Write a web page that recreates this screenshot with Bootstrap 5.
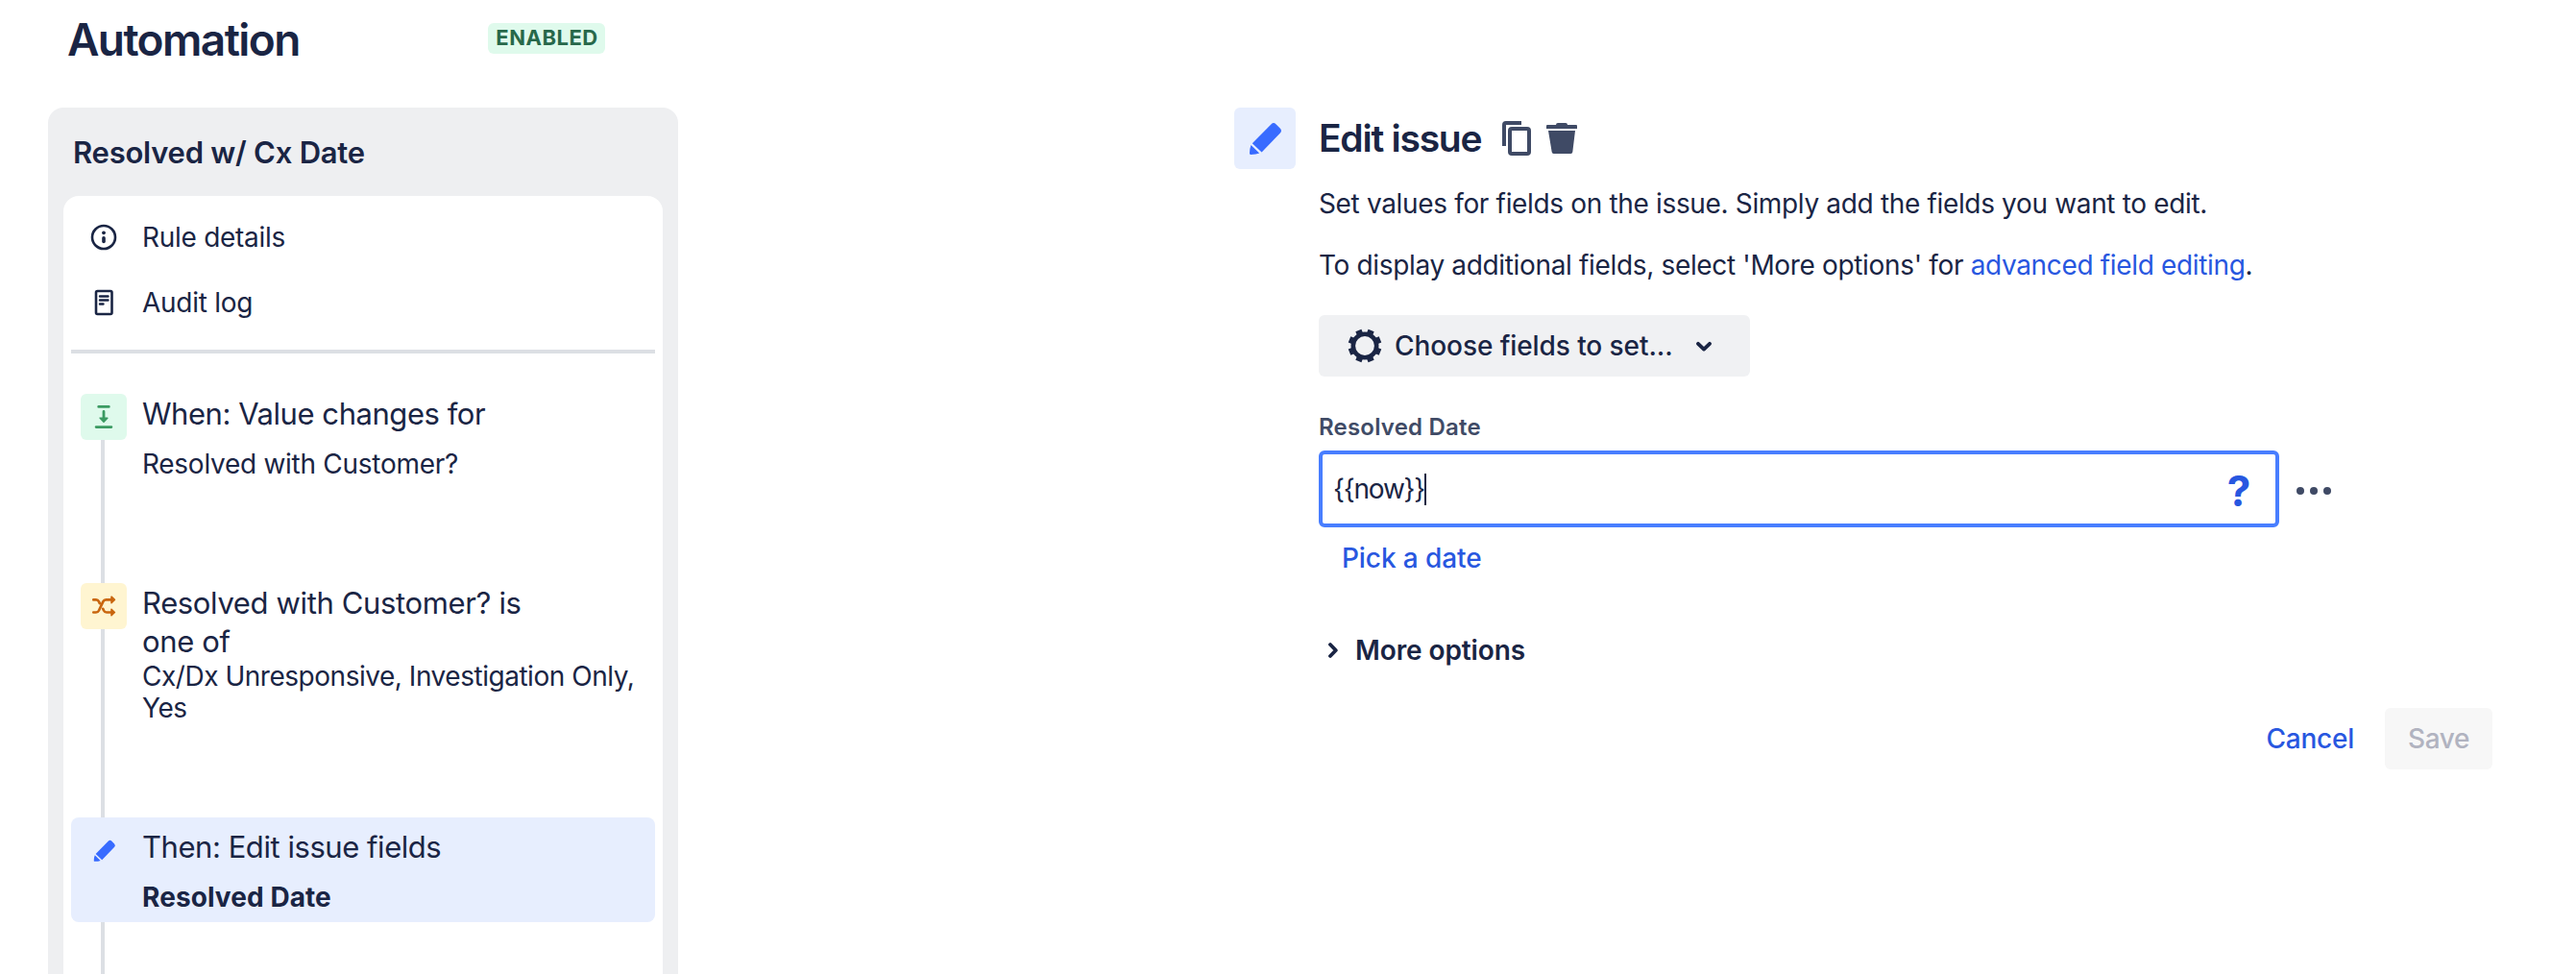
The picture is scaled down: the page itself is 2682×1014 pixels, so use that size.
<!DOCTYPE html>
<html lang="en">
<head>
    <meta charset="UTF-8">
    <meta name="viewport" content="width=device-width, initial-scale=1.0">
    <title>Automation</title>
    <link rel="stylesheet" href="https://cdn.jsdelivr.net/npm/bootstrap@5.3.2/dist/css/bootstrap.min.css">
    <style>
        body{
            font-family: Inter, "Liberation Sans", sans-serif;
            font-size: 28px;
            line-height: 40px;
            letter-spacing: -.28px;
            color: #1a2544;
            background: #fff;
            height: 1014px;
            overflow: hidden;
        }
        svg{ display: block; flex: none; }

        .topo{ height: 112px; padding-left: 70px; }
        .topo h1{ width: 438px; font-size: 46px; font-weight: 600; line-height: 56px; letter-spacing: -1.6px; margin: 13px 0 0; }
        .status{
            width: 122px; height: 32px; margin-top: 24px; padding-left: 1px; border-radius: 6px;
            background: #dffaec; color: #27684a;
            font-size: 22px; font-weight: 700; line-height: 30px; letter-spacing: .5px;
        }

        /* rule panel */
        .regra{ width: 656px; height: 902px; margin-left: 50px; padding: 0 16px; background: #eeeff1; border-radius: 16px 16px 0 0; }
        .regra h2{ height: 92px; padding: 27px 0 0 10px; margin: 0; font-size: 31px; font-weight: 600; line-height: 40px; letter-spacing: -.25px; }
        .passos{ height: 810px; padding: 8px; background: #fff; border-radius: 16px 16px 0 0; }
        .item{ height: 68px; padding: 1px 0 0 18px; gap: 24px; }
        .linha{ height: 4px; background: #dcdfe4; margin: 16px 0 42px; }
        .passo{ padding-left: 10px; gap: 16px; }
        .trilho{ width: 48px; }
        .trilho i{ width: 4px; background: #dcdfe4; flex: 1; margin-right: 2px; }
        .quadro{ width: 48px; height: 48px; border-radius: 6px; }
        .titulo{ font-size: 31px; line-height: 40px; letter-spacing: -.45px; padding-top: 1px; }
        .detalhe{ line-height: 33px; }
        .ativo{ height: 109px; padding-top: 10px; background: #e7eefe; border-radius: 8px; }

        /* component form */
        .editor{ margin-left: 579px; width: 1310px; }
        .tile{ width: 64px; height: 64px; border-radius: 6px; background: #e7eefe; margin-right: 24px; }
        .editor h3{ width: 191px; font-size: 39px; font-weight: 600; line-height: 64px; letter-spacing: -1.25px; margin: 0; }
        .corpo{ padding: 16px 0 0 88px; }
        .corpo p{ margin: 0 0 24px; letter-spacing: -.34px; }
        .corpo a{ color: #2857e0; text-decoration: none; }
        .escolher{ width: 449px; height: 64px; margin-top: 32px; padding-left: 30px; background: #f0f1f3; border-radius: 6px; font-weight: 500; letter-spacing: -.08px; }
        .rotulo{ margin-top: 37px; font-size: 24px; font-weight: 600; line-height: 32px; letter-spacing: .2px; color: #404b66; }
        .campo{ width: 1000px; height: 80px; border: 4px solid #487eff; border-radius: 6px; padding: 0 26px 0 11px; }
        .campo span{ letter-spacing: -1.2px; }
        .cursor{ width: 2px; height: 33px; background: #1a2544; }
        .ajuda{ font-size: 44px; font-weight: 700; color: #2857e0; padding-top: 3px; }
        .data{ margin: 12px 0 0 24px; font-weight: 500; letter-spacing: -.1px; }
        .mais{ margin: 56px 0 0 10px; gap: 18px; font-weight: 600; letter-spacing: -.1px; }
        .acoes{ height: 64px; margin-top: 40px; gap: 32px; font-weight: 500; letter-spacing: -.25px; }
        .salvar{ width: 112px; height: 64px; line-height: 64px; border-radius: 6px; background: #f7f7f7; color: #b1b3c0; letter-spacing: -.4px; }
    </style>
</head>
<body>
    <header class="topo d-flex">
        <h1>Automation</h1>
        <div class="status text-center">ENABLED</div>
    </header>

    <main class="d-flex align-items-start">
        <section class="regra">
            <h2>Resolved w/ Cx Date</h2>
            <div class="passos">
                <div class="item d-flex align-items-center">
                    <svg width="32" height="32" viewBox="0 0 32 32">
                        <circle cx="16" cy="16" r="12" fill="none" stroke="#1a2544" stroke-width="2.6"/>
                        <circle cx="16" cy="11.3" r="1.9" fill="#1a2544"/>
                        <path d="M16 16.8v3.600" stroke="#1a2544" stroke-width="3.6" stroke-linecap="round"/>
                    </svg>
                    <span>Rule details</span>
                </div>
                <div class="item d-flex align-items-center">
                    <svg width="32" height="32" viewBox="0 0 32 32" fill="none" stroke="#1a2544" stroke-linecap="round">
                        <rect x="8" y="4" width="16.5" height="24" rx="1.5" stroke-width="2.6"/>
                        <path d="M12 9.500h8.500M12 13.500h8.500M12 17.500h3.500" stroke-width="2.4"/>
                    </svg>
                    <span>Audit log</span>
                </div>
                <div class="linha"></div>

                <!-- trigger -->
                <div class="passo d-flex" style="height:197px">
                    <div class="trilho d-flex flex-column align-items-center">
                        <div class="quadro" style="background:#dffaec">
                            <svg width="48" height="48" viewBox="0 0 48 48" fill="none" stroke="#3b9a62" stroke-width="2.8" stroke-linecap="round">
                                <path d="M18.700 13.400h10.600M16.100 34.600h15.800M24 18.500v7"/>
                                <path d="M20.200 25.200h7.600L24 29.200z" fill="#3b9a62" stroke-width="1.6" stroke-linejoin="round"/>
                            </svg>
                        </div>
                        <i></i>
                    </div>
                    <div>
                        <div class="titulo">When: Value changes for</div>
                        <div class="detalhe mt-3">Resolved with Customer?</div>
                    </div>
                </div>

                <!-- condition -->
                <div class="passo d-flex" style="height:244px">
                    <div class="trilho d-flex flex-column align-items-center">
                        <div class="quadro" style="background:#fff5d1">
                            <svg width="48" height="48" viewBox="0 0 48 48" fill="none" stroke="#c9660f" stroke-width="2.7" stroke-linecap="round">
                                <path d="M13.300 17.400h2.700q2 0 3 2l.8 1.700M13.300 30.500h2.700q2 0 3-2l4.300-9.100q1-2 3-2h6M23.200 26.800l.8 1.700q1 2 3 2h5.300"/>
                                <path d="M32 14.200l3.400 3.200-3.400 3.200zM32 27.300l3.400 3.200-3.400 3.200z" fill="#c9660f" stroke-width="1.6" stroke-linejoin="round"/>
                            </svg>
                        </div>
                        <i></i>
                    </div>
                    <div>
                        <div class="titulo" style="letter-spacing:-.36px">Resolved with Customer? is<br>one of</div>
                        <div class="detalhe" style="letter-spacing:-.47px">Cx/Dx Unresponsive, Investigation Only,<br>Yes</div>
                    </div>
                </div>

                <!-- selected action -->
                <div class="passo ativo d-flex">
                    <div class="quadro d-flex align-items-center justify-content-center">
                        <svg width="43" height="43" viewBox="0 0 64 64" fill="#386bff">
                            <path d="M18.800 37.200L38.600 17.200Q41 14.800 43.400 17.200L47.700 21.600Q50.200 24.100 47.900 26.500L28.600 46.400z"/>
                            <path d="M17.500 39L26.200 47.600Q23 48.900 17.200 48.900 15.900 48.900 16 47.500 16.200 42 17.500 39z"/>
                        </svg>
                    </div>
                    <div>
                        <div class="titulo">Then: Edit issue fields</div>
                        <div class="detalhe mt-3 fw-bold" style="letter-spacing:.08px">Resolved Date</div>
                    </div>
                </div>
                <div class="passo d-flex" style="height:54px">
                    <div class="trilho d-flex flex-column align-items-center"><i></i></div>
                </div>
            </div>
        </section>

        <section class="editor">
            <div class="d-flex align-items-center">
                <div class="tile">
                    <svg width="64" height="64" viewBox="0 0 64 64" fill="#386bff">
                        <path d="M18.800 37.200L38.600 17.200Q41 14.800 43.400 17.200L47.700 21.600Q50.200 24.100 47.900 26.500L28.600 46.400z"/>
                        <path d="M17.500 39L26.200 47.600Q23 48.900 17.200 48.900 15.900 48.900 16 47.500 16.200 42 17.500 39z"/>
                    </svg>
                </div>
                <h3 class="text-nowrap">Edit issue</h3>
                <svg class="me-3" width="30" height="36" viewBox="0 0 30 36" fill="none" stroke="#3f4a65" stroke-width="4">
                    <path d="M2 26V4q0-2 2-2h16"/>
                    <rect x="8" y="8" width="20" height="26" rx="2"/>
                </svg>
                <svg width="32" height="32" viewBox="0 0 32 32" fill="#3f4a65">
                    <path d="M0 6V3q0-1 1-1h9q0-2 2-2h8q2 0 2 2h9q1 0 1 1v3z"/>
                    <path d="M2 8h28l-2.700 22.300q-.2 1.700-1.900 1.700H7.600q-1.700 0-1.900-1.700z"/>
                </svg>
            </div>
            <div class="corpo">
                <p>Set values for fields on the issue. Simply add the fields you want to edit.</p>
                <p>To display additional fields, select 'More options' for <a href="#">advanced field editing</a>.</p>

                <div class="escolher d-flex align-items-center">
                    <svg width="36" height="36" viewBox="-18 -18 36 36" fill="none" stroke="#1a2544">
                        <circle r="12.2" stroke-width="4.6"/>
                        <g stroke-width="6.6">
                            <path d="M0-12V-17.300M0 12V17.300M-12 0H-17.300M12 0H17.300" transform="rotate(22.5)"/>
                            <path d="M0-12V-17.300M0 12V17.300M-12 0H-17.300M12 0H17.300" transform="rotate(67.5)"/>
                        </g>
                    </svg>
                    <span style="margin-left:13px">Choose fields to set...</span>
                    <svg style="margin-left:23px" width="18" height="14" viewBox="0 0 18 14" fill="none" stroke="#1a2544" stroke-width="3.8" stroke-linecap="round" stroke-linejoin="round"><path d="M3 4.800l6 5.800 6-5.800"/></svg>
                </div>

                <div class="rotulo">Resolved Date</div>
                <div class="d-flex align-items-center mt-2">
                    <div class="campo d-flex align-items-center">
                        <span>{{now}}</span>
                        <div class="cursor"></div>
                        <div class="ajuda ms-auto">?</div>
                    </div>
                    <svg class="mt-1" style="margin-left:18px" width="36" height="8" viewBox="0 0 36 8" fill="#3f4a65"><circle cx="4" cy="4" r="4"/><circle cx="18" cy="4" r="4"/><circle cx="32" cy="4" r="4"/></svg>
                </div>
                <div class="data"><a href="#">Pick a date</a></div>

                <div class="mais d-flex align-items-center">
                    <svg width="10" height="18" viewBox="0 0 10 18" fill="none" stroke="#1a2544" stroke-width="3.8" stroke-linecap="round" stroke-linejoin="round"><path d="M2 3l5.800 6L2 15"/></svg>
                    <span>More options</span>
                </div>

                <div class="acoes d-flex align-items-center justify-content-end">
                    <a href="#">Cancel</a>
                    <div class="salvar text-center">Save</div>
                </div>
            </div>
        </section>
    </main>
    <script src="https://cdn.jsdelivr.net/npm/bootstrap@5.3.2/dist/js/bootstrap.bundle.min.js"></script>
</body>
</html>
